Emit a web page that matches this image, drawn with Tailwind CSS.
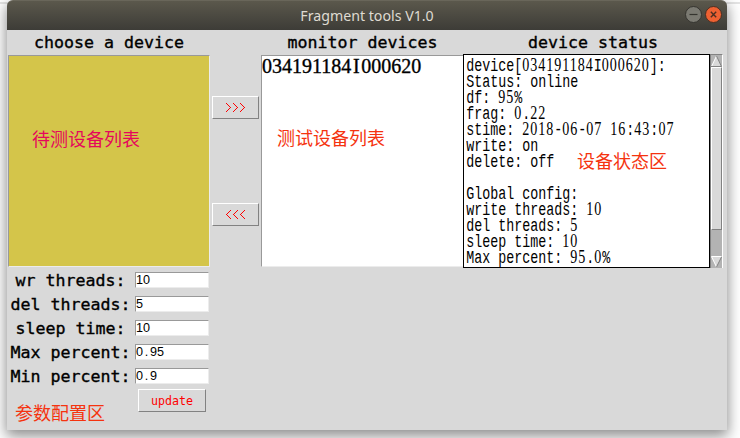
<!DOCTYPE html>
<html lang="zh">
<head>
<meta charset="utf-8">
<title>Fragment tools V1.0</title>
<script src="https://cdn.jsdelivr.net/npm/@tailwindcss/browser@4"></script>
</head>
<body class="relative w-[740px] h-[438px] overflow-hidden bg-white font-['DejaVu_Sans_Mono',monospace] text-black">
<div class="absolute inset-x-0 top-[2px] h-[2px] bg-[#e4e4e4]"></div>
<main class="relative ml-[7px] w-[720px] h-[430px] rounded-t-[6px] bg-[#d9d9d9] shadow-[0_5px_14px_1px_rgba(0,0,0,0.45)]">
  <header class="relative h-[30px] rounded-t-[6px] bg-linear-to-b from-[#5b584c] to-[#3d3c37] border-t border-[#69665a] flex items-center justify-center">
    <h1 class="font-['Noto_Sans',sans-serif] text-[14.2px] leading-[28px] text-[#dfdbd2] whitespace-nowrap">Fragment tools V1.0</h1>
    <div class="absolute right-[5px] top-[5px] flex gap-[3px]">
      <svg width="17" height="17" viewBox="0 0 17 17"><circle cx="8.5" cy="8.5" r="8" fill="#7b7a72" stroke="#35342f"/><path d="M4.5 8.5h8" stroke="#35342f" stroke-width="1.2"/></svg>
      <svg width="17" height="17" viewBox="0 0 17 17"><circle cx="8.5" cy="8.5" r="8" fill="#ee6132" stroke="#4b2f22"/><path d="M5.8 5.8l5.4 5.4M11.2 5.8l-5.4 5.4" stroke="#4b2f22" stroke-width="1.4"/></svg>
    </div>
  </header>

  <section class="flex h-[238px] pl-px text-[16.61px] [-webkit-text-stroke:0.35px_black]">
    <div class="w-[202px]">
      <h2 class="h-[25px] leading-[25px] text-center whitespace-nowrap">choose a device</h2>
      <div class="h-[212px] bg-[#d4c54a] border border-t-[#999] border-l-[#999] border-b-[#ececec] border-r-[#ececec]"></div>
    </div>
    <div class="w-[51px] pl-[2px] pt-[66px] [-webkit-text-stroke:0]">
      <button class="flex items-center justify-center w-[47px] h-[23px] border border-t-white border-l-white border-b-[#828282] border-r-[#828282]">
        <svg width="19" height="9" viewBox="0 0 19 9" fill="none" stroke="#f00" shape-rendering="crispEdges"><path d="M0 0l4.5 4.5L0 9M7 0l4.5 4.5L7 9M14 0l4.5 4.5L14 9"/></svg>
      </button>
      <button class="mt-[84px] flex items-center justify-center w-[47px] h-[23px] border border-t-white border-l-white border-b-[#828282] border-r-[#828282]">
        <svg width="19" height="9" viewBox="0 0 19 9" fill="none" stroke="#f00" shape-rendering="crispEdges"><path d="M5 0L.5 4.5 5 9M12 0L7.5 4.5 12 9M19 0l-4.5 4.5L19 9"/></svg>
      </button>
    </div>
    <div class="w-[202px]">
      <h2 class="h-[25px] leading-[25px] pl-px text-center whitespace-nowrap">monitor devices</h2>
      <div class="h-[212px] bg-white border border-r-0 border-t-[#999] border-l-[#999] border-b-[#ececec] font-['Liberation_Serif',serif] text-[20px] leading-[21px] whitespace-nowrap">034191184<span class="inline-block w-[10px] text-center">I</span>000620</div>
    </div>
    <div class="w-[260px]">
      <h2 class="h-[24px] leading-[25px] text-center whitespace-nowrap">device status</h2>
      <div class="flex h-[214px] [-webkit-text-stroke:0]">
        <div class="w-[247px] bg-white border border-black overflow-hidden">
          <div class="pl-[3px] pt-[3px] w-[325px] origin-top-left scale-x-[0.741] font-['Liberation_Mono',monospace] text-[18px] leading-[16px] whitespace-pre [&_b]:font-normal [&_b]:font-['Liberation_Serif',serif] [&_b]:text-[19px] [&_b]:tracking-[1.3px] [&_b]:leading-[0]"><p>device[<b>034191184</b>I<b>000620</b>]:</p><p>Status: online</p><p>df: <b>95</b>%</p><p>frag: <b>0</b>.<b>22</b></p><p>stime: <b>2018</b>-<b>06</b>-<b>07</b> <b>16</b>:<b>43</b>:<b>07</b></p><p>write: on</p><p>delete: off</p><p> </p><p>Global config:</p><p>write threads: <b>10</b></p><p>del threads: <b>5</b></p><p>sleep time: <b>10</b></p><p>Max percent: <b>95</b>.<b>0</b>%</p></div>
        </div>
        <div class="w-[13px] bg-[#b3b3b3] border-t border-l border-t-[#828282] border-l-[#828282] border-r border-r-white flex flex-col">
          <svg width="11" height="12" viewBox="0 0 11 12"><path d="M5.5 1L.5 11.5h10z" fill="#d9d9d9"/><path d="M5.5 1L.5 11.5" stroke="#fff"/><path d="M5.5 1l5 10.5H0" fill="none" stroke="#828282"/></svg>
          <div class="h-[163px] bg-[#d9d9d9] border border-t-white border-l-white border-b-[#828282] border-r-[#828282]"></div>
          <svg class="mt-auto" width="11" height="12" viewBox="0 0 11 12"><path d="M.5 1h10l-5 10z" fill="#d9d9d9"/><path d="M5.5 11L.5 .5h10" fill="none" stroke="#fff"/><path d="M10.5 1l-5 10" stroke="#828282"/></svg>
        </div>
      </div>
    </div>
  </section>

  <section class="w-[203px] pt-[4px] text-[16.61px] leading-[18px]">
    <div class="flex h-[24px]"><label class="w-[128px] pr-px text-center whitespace-nowrap [-webkit-text-stroke:0.35px_black]">wr threads:</label><div class="w-[74px] h-[16px] bg-white border border-t-[#999] border-l-[#999] border-b-[#ececec] border-r-[#ececec] font-['Liberation_Sans',sans-serif] text-[12.6px] leading-[14px]">10</div></div>
    <div class="flex h-[24px]"><label class="w-[128px] pr-px text-center whitespace-nowrap [-webkit-text-stroke:0.35px_black]">del threads:</label><div class="w-[74px] h-[16px] bg-white border border-t-[#999] border-l-[#999] border-b-[#ececec] border-r-[#ececec] font-['Liberation_Sans',sans-serif] text-[12.6px] leading-[14px]">5</div></div>
    <div class="flex h-[24px]"><label class="w-[128px] pr-px text-center whitespace-nowrap [-webkit-text-stroke:0.35px_black]">sleep time:</label><div class="w-[74px] h-[16px] bg-white border border-t-[#999] border-l-[#999] border-b-[#ececec] border-r-[#ececec] font-['Liberation_Sans',sans-serif] text-[12.6px] leading-[14px]">10</div></div>
    <div class="flex h-[24px]"><label class="w-[128px] pr-px text-center whitespace-nowrap [-webkit-text-stroke:0.35px_black]">Max percent:</label><div class="w-[74px] h-[16px] bg-white border border-t-[#999] border-l-[#999] border-b-[#ececec] border-r-[#ececec] font-['Liberation_Sans',sans-serif] text-[12.6px] leading-[14px]">0<span class="inline-block w-[7px] text-center">.</span>95</div></div>
    <div class="flex h-[24px]"><label class="w-[128px] pr-px text-center whitespace-nowrap [-webkit-text-stroke:0.35px_black]">Min percent:</label><div class="w-[74px] h-[16px] bg-white border border-t-[#999] border-l-[#999] border-b-[#ececec] border-r-[#ececec] font-['Liberation_Sans',sans-serif] text-[12.6px] leading-[14px]">0<span class="inline-block w-[7px] text-center">.</span>9</div></div>
    <button class="block ml-[131px] -mt-[3px] w-[68px] h-[23px] border border-t-white border-l-white border-b-[#828282] border-r-[#828282] text-[11.65px] leading-[22px] text-[#f00] text-center">update</button>
  </section>
</main>
<div class="font-['Noto_Sans_CJK_SC',sans-serif] text-[18px] leading-[26px] whitespace-nowrap text-[#f5330f]">
  <span class="absolute left-[32px] top-[125px] text-[#e5085c]">待测设备列表</span>
  <span class="absolute left-[277px] top-[124px]">测试设备列表</span>
  <span class="absolute left-[577px] top-[147px]">设备状态区</span>
  <span class="absolute left-[15px] top-[399px]">参数配置区</span>
</div>
</body>
</html>
